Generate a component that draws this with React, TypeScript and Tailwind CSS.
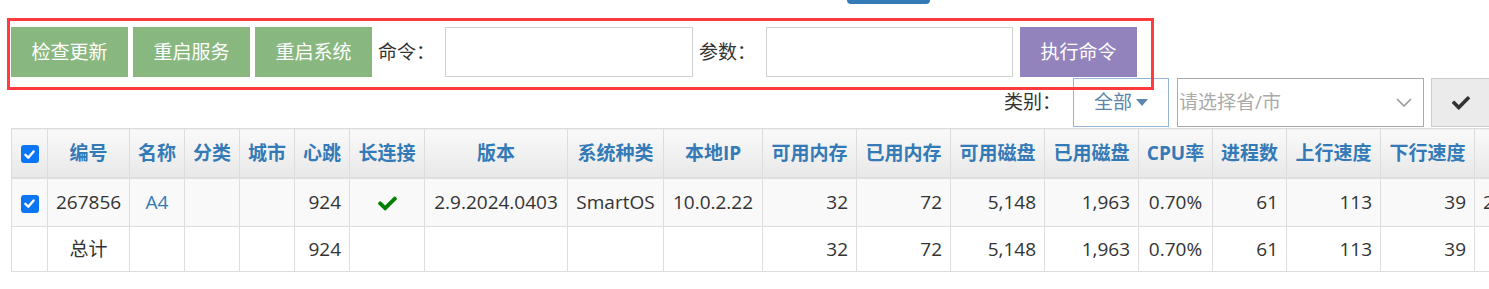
import { FaCheck } from 'react-icons/fa';

const cols = [36, 82, 55, 55, 55, 55, 75, 143, 96, 99, 94, 94, 94, 94, 74, 74, 94, 94, 300];

const headers = [
  '编号', '名称', '分类', '城市', '心跳', '长连接', '版本', '系统种类', '本地IP',
  '可用内存', '已用内存', '可用磁盘', '已用磁盘', 'CPU率', '进程数', '上行速度', '下行速度', '最后在线',
];

function Checkbox() {
  return (
    <span className="inline-flex items-center justify-center w-[18px] h-[18px] rounded-[3px] bg-[#0a75f5] align-middle">
      <svg viewBox="0 0 12 12" className="w-[13px] h-[13px]">
        <path d="M2.2 6.3 L4.9 8.9 L9.8 3.2" fill="none" stroke="white" strokeWidth="2.2" strokeLinecap="round" strokeLinejoin="round" />
      </svg>
    </span>
  );
}

const td = 'border border-[#dddddd] px-[8px]';

export default function App() {
  return (
    <div className="relative w-[1489px] h-[289px] overflow-hidden bg-white text-[#333] text-[19px] font-['Open_Sans','Noto_Sans_CJK_SC',sans-serif]">
      {/* tab remnant at top */}
      <div className="ml-[847px] w-[83px] h-[4px] rounded-b-[5px] bg-[#337ab7]" />

      {/* toolbar */}
      <div className="mt-[23px] pl-[11px] flex items-center h-[50px]">
        <button className="w-[117px] h-[50px] bg-[#88b87f] text-white">检查更新</button>
        <button className="ml-[5px] w-[117px] h-[50px] bg-[#88b87f] text-white">重启服务</button>
        <button className="ml-[5px] w-[117px] h-[50px] bg-[#88b87f] text-white">重启系统</button>
        <span className="ml-[6px] w-[67px]">命令：</span>
        <input className="w-[248px] h-[50px] border border-[#d0d0d0] outline-none" />
        <span className="ml-[6px] w-[67px]">参数：</span>
        <input className="w-[247px] h-[50px] border border-[#d0d0d0] outline-none" />
        <button className="ml-[7px] w-[117px] h-[50px] bg-[#9283bd] text-white">执行命令</button>
      </div>

      {/* filter row */}
      <div className="pt-[1px] mb-[1px] flex items-center justify-end h-[50px]">
        <span className="w-[69px]">类别：</span>
        <div className="w-[96px] h-[49px] border border-[#94b6d3] flex items-center justify-center gap-[4px] text-[#5a85ad]">
          <span>全部</span>
          <svg viewBox="0 0 12 8" className="w-[12px] h-[8px]">
            <path d="M0 0 H12 L6 7 Z" fill="#5a85ad" />
          </svg>
        </div>
        <div className="ml-[8px] w-[247px] h-[49px] border border-[#aaaaaa] flex items-center justify-between pl-[1px] pr-[11px] text-[#aaaaaa]">
          <span>请选择省/市</span>
          <svg viewBox="0 0 16 9" className="w-[16px] h-[9px]">
            <path d="M1 1 L8 8 L15 1" fill="none" stroke="#999" strokeWidth="1.6" />
          </svg>
        </div>
        <button className="ml-[7px] w-[58px] h-[49px] bg-[#ebebeb] border border-[#cccccc] border-r-0 flex items-center justify-center text-[#333]">
          <FaCheck className="w-[18px] h-[18px]" />
        </button>
      </div>

      {/* table */}
      <table className="ml-[11px] table-fixed border-collapse w-[1763px]">
        <colgroup>
          {cols.map((w, i) => (
            <col key={i} style={{ width: w }} />
          ))}
        </colgroup>
        <thead>
          <tr className="h-[49px]">
            <th className="border border-[#dddddd] border-b-2 bg-linear-to-b from-[#fafafa] to-[#e8e8e8]">
              <Checkbox />
            </th>
            {headers.map((h) => (
              <th
                key={h}
                className="border border-[#dddddd] border-b-2 px-[4px] bg-linear-to-b from-[#fafafa] to-[#e8e8e8] text-[#337ab7] font-bold text-center whitespace-nowrap"
              >
                {h}
              </th>
            ))}
          </tr>
        </thead>
        <tbody>
          <tr className="h-[49px] bg-[#f9f9f9]">
            <td className={`${td} text-center`}>
              <Checkbox />
            </td>
            <td className={`${td} text-center`}>267856</td>
            <td className={`${td} text-center text-[#337ab7]`}>A4</td>
            <td className={td}></td>
            <td className={td}></td>
            <td className={`${td} text-right`}>924</td>
            <td className={`${td} text-center`}>
              <FaCheck className="inline w-[21px] h-[19px] text-[#008000]" />
            </td>
            <td className={`${td} text-center whitespace-nowrap`}>2.9.2024.0403</td>
            <td className={`${td} text-center`}>SmartOS</td>
            <td className={`${td} text-center`}>10.0.2.22</td>
            <td className={`${td} text-right`}>32</td>
            <td className={`${td} text-right`}>72</td>
            <td className={`${td} text-right`}>5,148</td>
            <td className={`${td} text-right`}>1,963</td>
            <td className={`${td} text-center`}>0.70%</td>
            <td className={`${td} text-right`}>61</td>
            <td className={`${td} text-right`}>113</td>
            <td className={`${td} text-right`}>39</td>
            <td className={`${td} whitespace-nowrap`}>2024-04-03 10:21</td>
          </tr>
          <tr className="h-[45px] bg-white">
            <td className={td}></td>
            <td className={`${td} text-center`}>总计</td>
            <td className={td}></td>
            <td className={td}></td>
            <td className={td}></td>
            <td className={`${td} text-right`}>924</td>
            <td className={td}></td>
            <td className={td}></td>
            <td className={td}></td>
            <td className={td}></td>
            <td className={`${td} text-right`}>32</td>
            <td className={`${td} text-right`}>72</td>
            <td className={`${td} text-right`}>5,148</td>
            <td className={`${td} text-right`}>1,963</td>
            <td className={`${td} text-center`}>0.70%</td>
            <td className={`${td} text-right`}>61</td>
            <td className={`${td} text-right`}>113</td>
            <td className={`${td} text-right`}>39</td>
            <td className={td}></td>
          </tr>
        </tbody>
      </table>

      {/* annotation frame */}
      <div className="absolute left-[7px] top-[18px] w-[1147px] h-[72px] border-[3px] border-[#ff3b3f] pointer-events-none" />
    </div>
  );
}
